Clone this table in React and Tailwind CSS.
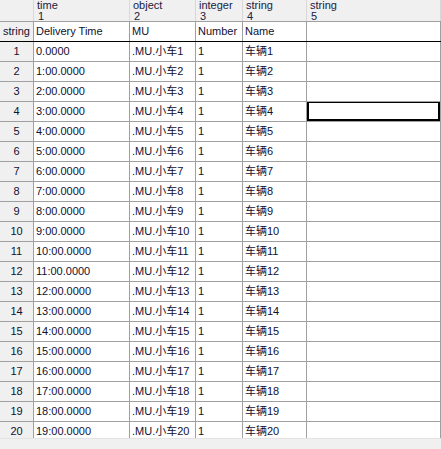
import React from 'react';

const cols = [
  { type: 'time', idx: 1, w: 'w-[96px]' },
  { type: 'object', idx: 2, w: 'w-[66px]' },
  { type: 'integer', idx: 3, w: 'w-[47px]' },
  { type: 'string', idx: 4, w: 'w-[64px]' },
  { type: 'string', idx: 5, w: 'flex-1' },
];

const rows = Array.from({ length: 20 }, (_, i) => ({
  n: i + 1,
  time: i === 0 ? '0.0000' : `${i}:00.0000`,
  mu: `.MU.小车${i + 1}`,
  num: '1',
  name: `车辆${i + 1}`,
}));

const font = { fontFamily: '"Liberation Sans", "Noto Sans CJK SC", sans-serif' };

function Cell({ w, children, selected }) {
  return (
    <div className={`${w} h-full shrink-0 border-r border-[#a0a0a0] pl-[2px] flex items-center whitespace-nowrap overflow-hidden relative`}>
      {children}
      {selected && <div className="absolute inset-0 -top-px border-2 border-black" />}
    </div>
  );
}

export default function App() {
  return (
    <div className="w-[441px] h-[449px] bg-white text-[11px] text-[#101030] flex flex-col overflow-hidden" style={font}>
      <div className="h-[438px] overflow-hidden">
        {/* column header */}
        <div className="flex h-[22px] bg-[#f0f0f0] border-b border-[#a0a0a0]">
          <div className="w-[34px] shrink-0 border-r border-[#d8d8d8]" />
          {cols.map((c) => (
            <div key={c.idx} className={`${c.w} shrink-0 border-r border-[#d8d8d8] pl-[3px] text-[#202040]`}>
              <div className="h-[11px] leading-[11px]">{c.type}</div>
              <div className="h-[10px] leading-[10px] pl-px">{c.idx}</div>
            </div>
          ))}
        </div>
        {/* type row */}
        <div className="flex h-[20px] border-b border-black">
          <div className="w-[34px] shrink-0 bg-[#f0f0f0] border-r border-[#a0a0a0] flex items-center justify-center">string</div>
          <Cell w="w-[96px]">Delivery Time</Cell>
          <Cell w="w-[66px]">MU</Cell>
          <Cell w="w-[47px]">Number</Cell>
          <Cell w="w-[64px]">Name</Cell>
          <Cell w="flex-1" />
        </div>
        {rows.map((r) => (
          <div key={r.n} className="flex h-[20px] border-b border-[#a0a0a0]">
            <div className="w-[34px] shrink-0 bg-[#f0f0f0] border-r border-[#a0a0a0] flex items-center justify-center">{r.n}</div>
            <Cell w="w-[96px]">{r.time}</Cell>
            <Cell w="w-[66px]">{r.mu}</Cell>
            <Cell w="w-[47px]">{r.num}</Cell>
            <Cell w="w-[64px]">{r.name}</Cell>
            <Cell w="flex-1" selected={r.n === 4} />
          </div>
        ))}
      </div>
      <div className="flex-1 bg-[#f0f0f0] border-t border-[#e4e4e4]" />
    </div>
  );
}
